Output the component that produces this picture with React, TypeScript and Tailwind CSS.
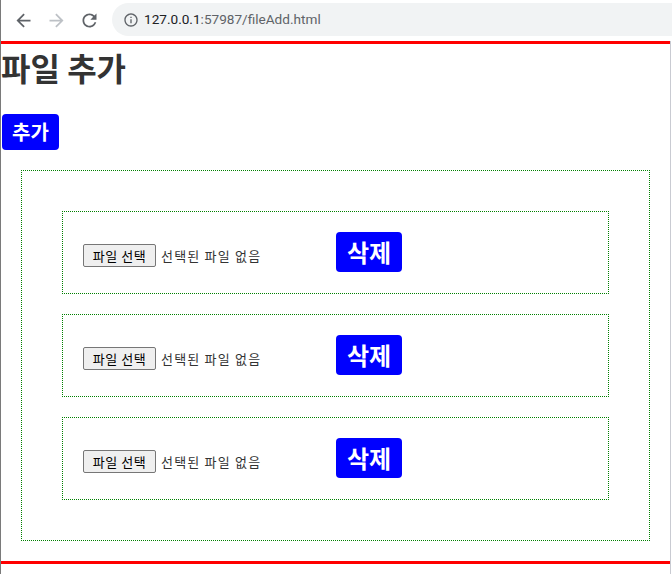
import { ReactNode } from "react";

const rows = [{ id: 0 }, { id: 1 }, { id: 2 }];

function Icon({ d, color, size }: { d: string; color: string; size: number }) {
  return (
    <svg width={size} height={size} viewBox="0 0 24 24" fill={color}>
      <path d={d} />
    </svg>
  );
}

function NavButton({ children }: { children: ReactNode }) {
  return <div className="w-[32px] h-[32px] flex items-center justify-center">{children}</div>;
}

function Toolbar() {
  return (
    <div className="h-[41px] flex items-start bg-white">
      <div className="flex items-center pt-[4px] pl-[6px] gap-px">
        <NavButton>
          <Icon size={21} color="#5f6368" d="M20 11H7.83l5.59-5.59L12 4l-8 8 8 8 1.41-1.41L7.83 13H20v-2z" />
        </NavButton>
        <NavButton>
          <Icon size={21} color="#bdc1c6" d="M12 4l-1.41 1.41L16.17 11H4v2h12.17l-5.58 5.59L12 20l8-8z" />
        </NavButton>
        <NavButton>
          <Icon
            size={21}
            color="#5f6368"
            d="M17.65 6.35C16.2 4.9 14.21 4 12 4c-4.42 0-7.99 3.58-7.99 8s3.57 8 7.99 8c3.73 0 6.84-2.55 7.73-6h-2.08c-.82 2.33-3.04 4-5.65 4-3.31 0-6-2.69-6-6s2.69-6 6-6c1.66 0 3.14.69 4.22 1.78L13 11h7V4l-2.35 2.35z"
          />
        </NavButton>
      </div>
      <div className="mt-[3px] ml-[7px] h-[33px] flex-1 rounded-l-full bg-[#f1f3f4] flex items-center pl-[11px]">
        <Icon
          size={16}
          color="#5f6368"
          d="M11 7h2v2h-2zm0 4h2v6h-2zm1-9C6.48 2 2 6.48 2 12s4.48 10 10 10 10-4.48 10-10S17.52 2 12 2zm0 18c-4.41 0-8-3.59-8-8s3.59-8 8-8 8 3.59 8 8-3.59 8-8 8z"
        />
        <span className="ml-[5px] text-[13.6px] font-['Roboto',sans-serif]">
          <span className="text-[#202124]">127.0.0.1</span>
          <span className="text-[#5f6368]">:57987/fileAdd.html</span>
        </span>
      </div>
    </div>
  );
}

function FileRow() {
  return (
    <div className="h-[83px] border border-dotted border-[#008000] px-5 pt-5 flex items-start">
      <div className="w-[253px] mt-[12px] flex items-center">
        <div className="w-[73px] h-[23px] border border-[#767676] rounded-[2px] bg-[#efefef] text-[13px] tracking-[0.5px] text-black leading-none flex items-center justify-center">
          파일 선택
        </div>
        <span className="ml-[5px] text-[13px] tracking-[1.2px] text-[#333]">선택된 파일 없음</span>
      </div>
      <button className="w-[66px] h-[40px] bg-[#0000ff] rounded-[4px] text-white font-bold text-[24px] leading-none flex items-center justify-center">
        삭제
      </button>
    </div>
  );
}

export default function App() {
  return (
    <div className="w-[672px] h-[574px] bg-white border-l border-[#7a7a7a] overflow-hidden flex flex-col font-['Noto_Sans_CJK_KR',sans-serif]">
      <Toolbar />
      <div className="flex flex-1 items-start">
        <main className="w-[669px] flex flex-col items-start border-y-[3px] border-[#ff0000]">
          <h1 className="text-[32px] font-bold leading-[46px] text-[#333]">파일 추가</h1>
          <button className="mt-[24px] ml-px w-[57px] h-[36px] bg-[#0000ff] rounded-[4px] text-white font-bold text-[20px] leading-none flex items-center justify-center">
            추가
          </button>
          <div className="mt-5 mb-5 mx-5 self-stretch border border-dotted border-[#008000] p-10 flex flex-col gap-5">
            {rows.map((row) => (
              <FileRow key={row.id} />
            ))}
          </div>
        </main>
        <div className="w-px self-stretch bg-[#c9cbd2]" />
      </div>
    </div>
  );
}
